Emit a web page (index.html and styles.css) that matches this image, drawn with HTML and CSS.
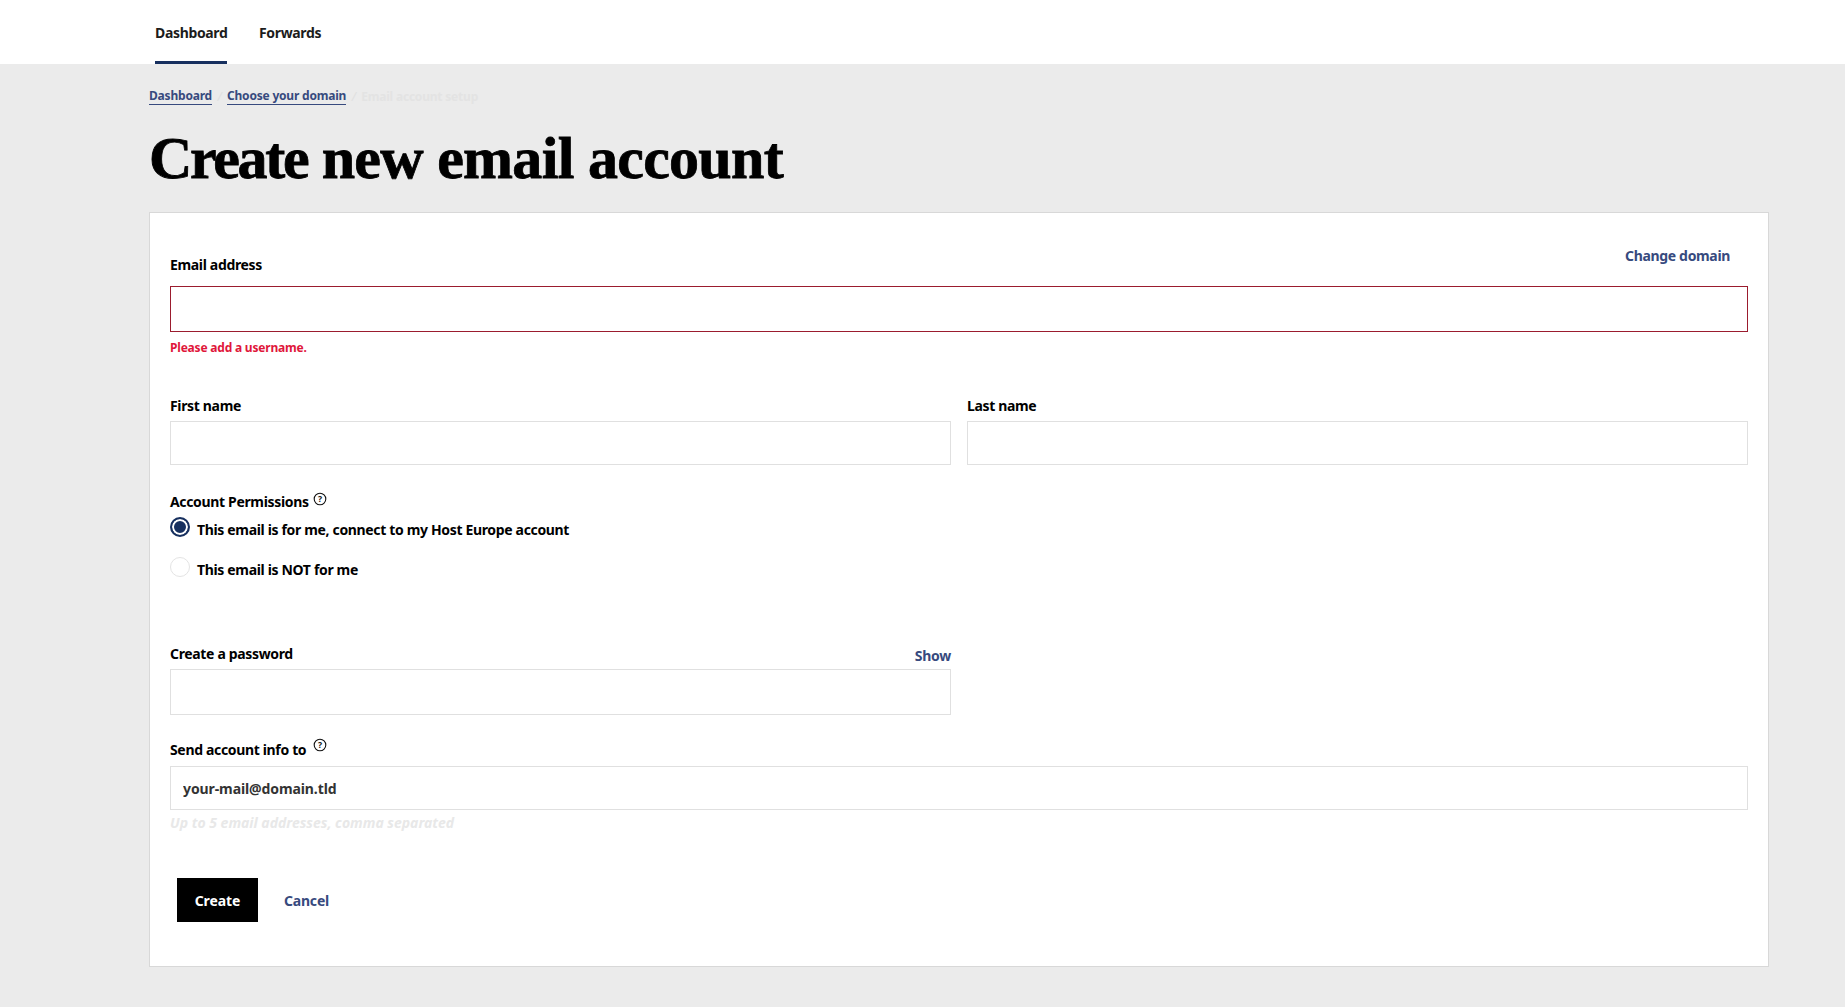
FILE: index.html
```html
<!DOCTYPE html>
<html lang="en">
<head>
<meta charset="utf-8">
<title>Create new email account</title>
<link rel="stylesheet" href="styles.css">
</head>
<body>
<nav class="topnav">
  <a class="tab tab-active" href="#">Dashboard</a>
  <a class="tab" href="#">Forwards</a>
</nav>
<main class="page">
  <div class="crumbs">
    <a class="crumb" href="#">Dashboard</a>
    <span class="sep">/</span>
    <a class="crumb" href="#">Choose your domain</a>
    <span class="sep">/</span>
    <span class="crumb-current">Email account setup</span>
  </div>
  <h1 class="title"><span class="title-first">Create</span> new email account</h1>
  <form class="card">
    <div class="row-head row-email">
      <label class="label">Email address</label>
      <a class="link link-change" href="#">Change domain</a>
    </div>
    <input class="input input-error" type="text">
    <p class="error">Please add a username.</p>
    <div class="two-col names">
      <div class="col">
        <label class="label">First name</label>
        <input class="input input-name" type="text">
      </div>
      <div class="col">
        <label class="label">Last name</label>
        <input class="input input-name" type="text">
      </div>
    </div>
    <div class="perm-head">
      <span class="label">Account Permissions</span>
      <svg class="help" viewBox="0 0 14 14"><circle cx="7" cy="7" r="5.8"/><text x="7" y="10.1" class="help-q">?</text></svg>
    </div>
    <label class="radio-row radio-first"><input class="radio" type="radio" name="perm" checked><span>This email is for me, connect to my Host Europe account</span></label>
    <label class="radio-row radio-second"><input class="radio" type="radio" name="perm"><span>This email is NOT for me</span></label>
    <div class="two-col password">
      <div class="col">
        <div class="row-head">
          <label class="label">Create a password</label>
          <a class="link link-show" href="#">Show</a>
        </div>
        <input class="input" type="password">
      </div>
    </div>
    <div class="perm-head send-head">
      <span class="label">Send account info to</span>
      <svg class="help" viewBox="0 0 14 14"><circle cx="7" cy="7" r="5.8"/><text x="7" y="10.1" class="help-q">?</text></svg>
    </div>
    <input class="input input-name input-value" type="text" value="your-mail@domain.tld">
    <p class="hint">Up to 5 email addresses, comma separated</p>
    <div class="actions">
      <button class="btn" type="button">Create</button>
      <a class="link link-cancel" href="#">Cancel</a>
    </div>
  </form>
</main>
</body>
</html>
```
FILE: styles.css
```css
* { box-sizing: border-box; }
html, body { margin: 0; height: 100%; }
body {
  background: #ebebeb;
  font-family: "Noto Sans", sans-serif;
  font-size: 14px;
  font-weight: 700;
  letter-spacing: -0.34px;
  color: #000;
  overflow: hidden;
}
a { text-decoration: none; }
.topnav {
  height: 64px;
  background: #fff;
  padding-left: 155px;
  display: flex;
  gap: 32px;
}
.tab {
  height: 64px;
  padding-top: 23px;
  line-height: 20px;
  color: #1c1c1c;
}
.tab-active { width: 72px; border-bottom: 3px solid #17305f; }
.page { padding: 0 76px 0 149px; }
.crumbs {
  display: flex;
  height: 36px;
  padding-top: 28px;
  align-items: center;
  font-size: 12px;
  letter-spacing: -0.2px;
}
.crumb {
  color: #374a7e;
  border-bottom: 1px solid #374a7e;
  line-height: 16px;
}
.sep { color: #e0e0e0; width: 15px; text-align: center; font-weight: 400; font-style: italic; }
.crumb-current { color: #e3e3e3; }
.title {
  margin: 0;
  padding-top: 23px;
  height: 112px;
  font-family: "Liberation Serif", serif;
  font-size: 60px;
  line-height: 70px;
  font-weight: 700;
  letter-spacing: -0.7px;
  -webkit-text-stroke: 0.8px #000;
  color: #000;
}
.title-first { letter-spacing: -2.3px; }
.card {
  background: #fff;
  border: 1px solid #d8d8d8;
  height: 755px;
  padding: 0 20px;
}
.label { color: #000; line-height: 20px; }
.row-head { display: flex; justify-content: space-between; }
.row-email { height: 73px; align-items: flex-end; padding-bottom: 11px; }
.link { color: #374a7e; }
.link-change { margin-right: 18px; align-self: flex-start; margin-top: 33px; }
.link-show { line-height: 20px; margin-top: 2px; letter-spacing: -0.25px; }
.link-cancel { letter-spacing: -0.2px; }
.input {
  display: block;
  width: 100%;
  height: 46px;
  background: #fff;
  border: 1px solid #e0e0e0;
  outline: none;
  padding: 0 12px;
  font: inherit;
  letter-spacing: inherit;
  color: #333;
  border-radius: 0;
}
.input-error { border-color: #9b1c2e; }
.input-name { height: 44px; }
.input-value { letter-spacing: -0.1px; }
.error {
  margin: 0;
  height: 32px;
  padding-top: 7px;
  line-height: 18px;
  font-size: 12px;
  letter-spacing: -0.2px;
  color: #e0163a;
}
.two-col { display: grid; grid-template-columns: 781px 781px; column-gap: 16px; }
.names { padding-top: 32px; }
.col .label { display: block; margin-bottom: 5px; }
.perm-head { display: flex; align-items: flex-start; margin-top: 27px; height: 20px; gap: 4px; }
.help { width: 14px; height: 14px; fill: none; stroke: #111; stroke-width: 1.1; }
.help-q { font-size: 8.5px; font-weight: 700; letter-spacing: 0; text-anchor: middle; fill: #111; stroke: none; }
.radio-row { display: flex; align-items: flex-start; gap: 7px; color: #000; height: 24px; line-height: 20px; }
.radio-row span { padding-top: 3px; }
.radio-first { margin-top: 5px; }
.radio-second { margin-top: 16px; }
.radio {
  appearance: none;
  margin: 0;
  width: 20px;
  height: 20px;
  border: 1px solid #e4e4e4;
  border-radius: 50%;
  background: #fff;
}
.radio:checked {
  border: 2px solid #17305f;
  background: #17305f;
  box-shadow: inset 0 0 0 2px #fff;
}
.password { margin-top: 63px; }
.password .row-head { height: 25px; align-items: flex-start; }
.password .label { margin: 0; }
.send-head { margin-top: 25px; gap: 7px; }
.send-head .help { margin-top: -2px; }
.send-head + .input { margin-top: 6px; }
.hint {
  margin: 0;
  padding-top: 3px;
  line-height: 20px;
  font-style: italic;
  letter-spacing: 0;
  color: #e8e8e8;
}
.actions { display: flex; align-items: center; gap: 26px; margin-top: 45px; padding-left: 7px; }
.btn {
  width: 81px;
  height: 44px;
  background: #000;
  color: #fff;
  border: 0;
  font: inherit;
  letter-spacing: -0.1px;
}
```
